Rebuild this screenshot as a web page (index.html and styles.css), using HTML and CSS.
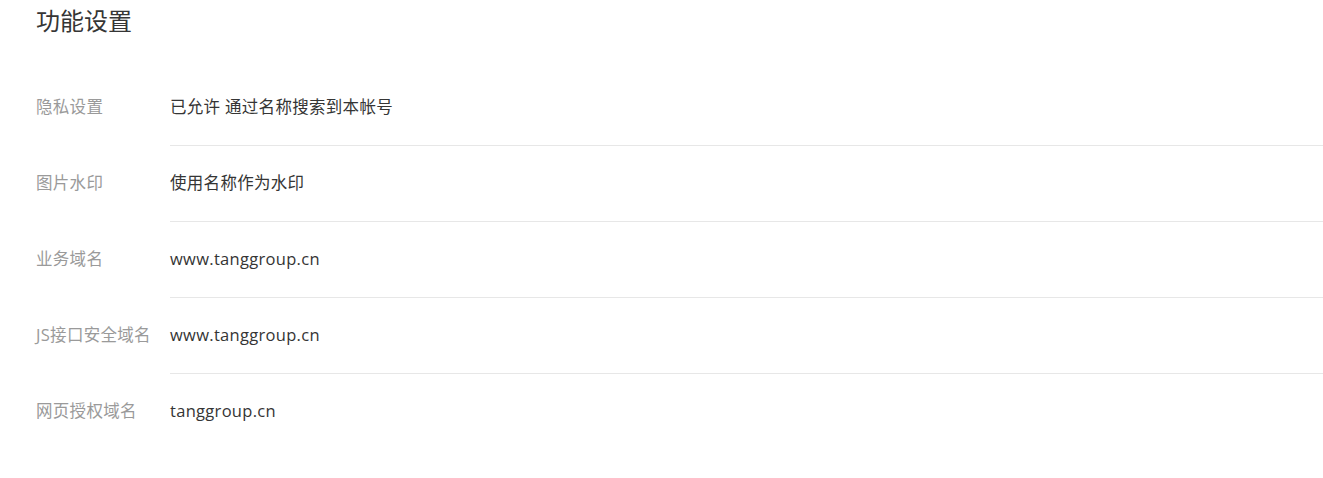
FILE: index.html
```html
<!DOCTYPE html>
<html lang="zh-CN">
<head>
<meta charset="utf-8">
<title>功能设置</title>
<link rel="stylesheet" href="styles.css">
</head>
<body>
<div class="page">
  <h2 class="title">功能设置</h2>
  <div class="list">
    <div class="row">
      <div class="label">隐私设置</div>
      <div class="value">已允许 通过名称搜索到本帐号</div>
    </div>
    <div class="row">
      <div class="label">图片水印</div>
      <div class="value">使用名称作为水印</div>
    </div>
    <div class="row">
      <div class="label">业务域名</div>
      <div class="value">www.tanggroup.cn</div>
    </div>
    <div class="row">
      <div class="label">JS接口安全域名</div>
      <div class="value">www.tanggroup.cn</div>
    </div>
    <div class="row">
      <div class="label">网页授权域名</div>
      <div class="value">tanggroup.cn</div>
    </div>
  </div>
</div>
</body>
</html>
```

FILE: styles.css
```css
html, body {
  margin: 0;
  padding: 0;
  background: #fff;
}
body {
  font-family: "Open Sans", "Noto Sans CJK SC", sans-serif;
  color: #333;
}
.page {
  padding-left: 36px;
}
.title {
  margin: 0;
  font-size: 24px;
  font-weight: normal;
  line-height: 42px;
  color: #353535;
}
.list {
  margin-top: 28px;
}
.row {
  display: flex;
  align-items: stretch;
}
.label {
  width: 134px;
  flex: none;
  box-sizing: border-box;
  display: flex;
  align-items: center;
  padding-bottom: 4px;
  font-size: 16.5px;
  letter-spacing: 0.3px;
  color: #9a9a9a;
  height: 76px;
  white-space: nowrap;
}
.value {
  flex: 1;
  box-sizing: border-box;
  display: flex;
  align-items: center;
  padding-bottom: 3px;
  height: 76px;
  font-size: 16.5px;
  letter-spacing: 0.3px;
  color: #353535;
  border-bottom: 1px solid #e7e7e7;
}
.row:last-child .value {
  border-bottom: none;
}
```
